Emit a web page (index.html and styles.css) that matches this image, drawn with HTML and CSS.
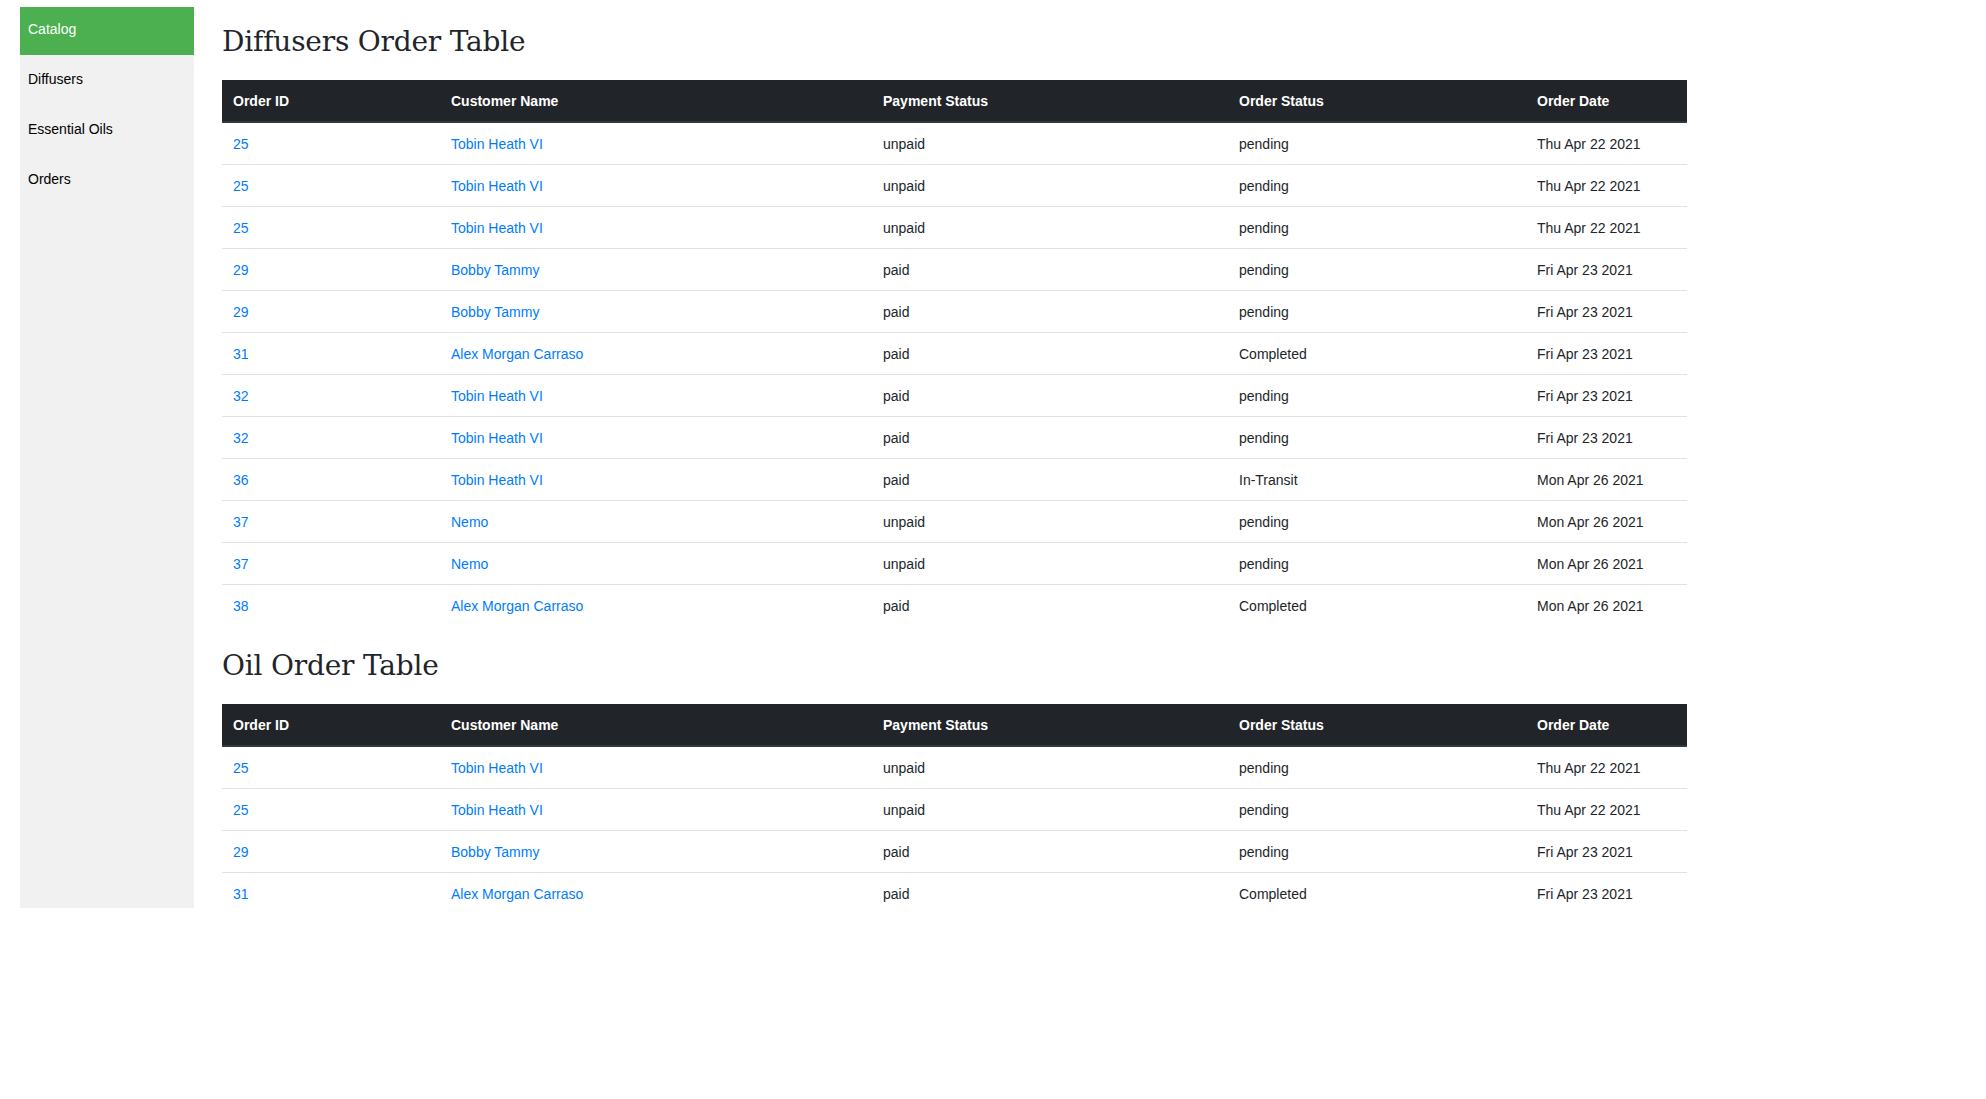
FILE: index.html
```html
<!DOCTYPE html>
<html lang="en">
<head>
<meta charset="utf-8">
<title>Orders</title>
<link rel="stylesheet" href="styles.css">
</head>
<body>
<div class="layout">
  <nav class="sidebar">
    <a class="nav-item active" href="#">Catalog</a>
    <a class="nav-item" href="#">Diffusers</a>
    <a class="nav-item" href="#">Essential Oils</a>
    <a class="nav-item" href="#">Orders</a>
  </nav>
  <main class="main">
    <h2 class="section-title">Diffusers Order Table</h2>
    <table class="orders">
      <colgroup>
        <col class="c1"><col class="c2"><col class="c3"><col class="c4"><col class="c5">
      </colgroup>
      <thead>
        <tr><th>Order ID</th><th>Customer Name</th><th>Payment Status</th><th>Order Status</th><th>Order Date</th></tr>
      </thead>
      <tbody>
        <tr><td><a href="#">25</a></td><td><a href="#">Tobin Heath VI</a></td><td>unpaid</td><td>pending</td><td>Thu Apr 22 2021</td></tr>
        <tr><td><a href="#">25</a></td><td><a href="#">Tobin Heath VI</a></td><td>unpaid</td><td>pending</td><td>Thu Apr 22 2021</td></tr>
        <tr><td><a href="#">25</a></td><td><a href="#">Tobin Heath VI</a></td><td>unpaid</td><td>pending</td><td>Thu Apr 22 2021</td></tr>
        <tr><td><a href="#">29</a></td><td><a href="#">Bobby Tammy</a></td><td>paid</td><td>pending</td><td>Fri Apr 23 2021</td></tr>
        <tr><td><a href="#">29</a></td><td><a href="#">Bobby Tammy</a></td><td>paid</td><td>pending</td><td>Fri Apr 23 2021</td></tr>
        <tr><td><a href="#">31</a></td><td><a href="#">Alex Morgan Carraso</a></td><td>paid</td><td>Completed</td><td>Fri Apr 23 2021</td></tr>
        <tr><td><a href="#">32</a></td><td><a href="#">Tobin Heath VI</a></td><td>paid</td><td>pending</td><td>Fri Apr 23 2021</td></tr>
        <tr><td><a href="#">32</a></td><td><a href="#">Tobin Heath VI</a></td><td>paid</td><td>pending</td><td>Fri Apr 23 2021</td></tr>
        <tr><td><a href="#">36</a></td><td><a href="#">Tobin Heath VI</a></td><td>paid</td><td>In-Transit</td><td>Mon Apr 26 2021</td></tr>
        <tr><td><a href="#">37</a></td><td><a href="#">Nemo</a></td><td>unpaid</td><td>pending</td><td>Mon Apr 26 2021</td></tr>
        <tr><td><a href="#">37</a></td><td><a href="#">Nemo</a></td><td>unpaid</td><td>pending</td><td>Mon Apr 26 2021</td></tr>
        <tr><td><a href="#">38</a></td><td><a href="#">Alex Morgan Carraso</a></td><td>paid</td><td>Completed</td><td>Mon Apr 26 2021</td></tr>
      </tbody>
    </table>

    <h2 class="section-title">Oil Order Table</h2>
    <table class="orders">
      <colgroup>
        <col class="c1"><col class="c2"><col class="c3"><col class="c4"><col class="c5">
      </colgroup>
      <thead>
        <tr><th>Order ID</th><th>Customer Name</th><th>Payment Status</th><th>Order Status</th><th>Order Date</th></tr>
      </thead>
      <tbody>
        <tr><td><a href="#">25</a></td><td><a href="#">Tobin Heath VI</a></td><td>unpaid</td><td>pending</td><td>Thu Apr 22 2021</td></tr>
        <tr><td><a href="#">25</a></td><td><a href="#">Tobin Heath VI</a></td><td>unpaid</td><td>pending</td><td>Thu Apr 22 2021</td></tr>
        <tr><td><a href="#">29</a></td><td><a href="#">Bobby Tammy</a></td><td>paid</td><td>pending</td><td>Fri Apr 23 2021</td></tr>
        <tr><td><a href="#">31</a></td><td><a href="#">Alex Morgan Carraso</a></td><td>paid</td><td>Completed</td><td>Fri Apr 23 2021</td></tr>
      </tbody>
    </table>
  </main>
</div>
</body>
</html>
```

FILE: styles.css
```css
* { box-sizing: border-box; }

html, body {
  margin: 0;
  padding: 0;
  background: #fff;
}

body {
  font-family: "Liberation Sans", Arial, sans-serif;
  font-size: 14px;
  color: #212529;
}

.layout {
  display: flex;
  align-items: flex-start;
  padding: 7px 0 0 20px;
}

.sidebar {
  width: 174px;
  height: 901px;
  flex: 0 0 174px;
  background: #f1f1f1;
  display: flex;
  flex-direction: column;
}

.nav-item {
  display: block;
  height: 50px;
  line-height: 48px;
  padding: 0 8px;
  color: #000;
  text-decoration: none;
  font-size: 14px;
}

.nav-item.active {
  height: 48px;
  line-height: 44px;
  background: #4caf50;
  color: #fff;
}

.main {
  margin-left: 28px;
  padding-top: 18px;
  width: 1465px;
}

.section-title {
  font-family: "DejaVu Serif", "Liberation Serif", serif;
  font-weight: normal;
  font-size: 28px;
  line-height: 34px;
  letter-spacing: -0.2px;
  color: #212529;
  margin: 0 0 21px 0;
}

.orders + .section-title {
  margin-top: 23px;
}

.orders {
  width: 1465px;
  border-collapse: collapse;
  table-layout: fixed;
}

.c1 { width: 218px; }
.c2 { width: 432px; }
.c3 { width: 356px; }
.c4 { width: 298px; }
.c5 { width: 161px; }

.orders th {
  background: #212529;
  color: #fff;
  font-weight: bold;
  text-align: left;
  padding: 13px 11px 11px 11px;
  line-height: 17px;
  border-bottom: 2px solid #32383e;
}

.orders td {
  padding: 13px 11px 11px 11px;
  line-height: 17px;
  border-top: 1px solid #dee2e6;
  vertical-align: top;
}

.orders tbody tr:first-child td {
  border-top: none;
}

.orders a {
  color: #007bff;
  text-decoration: none;
}
```
